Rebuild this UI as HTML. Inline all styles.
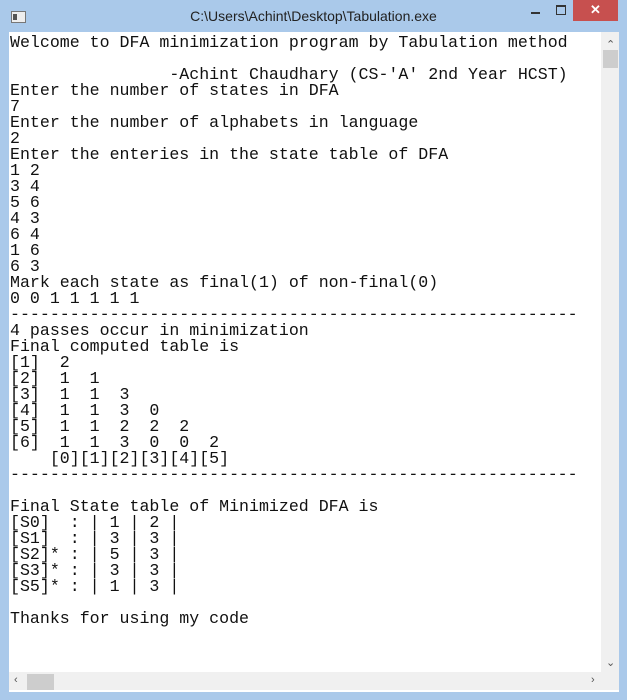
<!DOCTYPE html>
<html><head><style>
html,body{margin:0;padding:0;width:627px;height:700px;overflow:hidden;background:#aac9ea;}
.title{position:absolute;left:0;top:0;width:627px;height:32px;background:#aac9ea;}
.ttext{position:absolute;left:0;width:627px;top:8px;text-align:center;font:14px "Liberation Sans",sans-serif;color:#222;}
.icon{position:absolute;left:11px;top:11px;width:13px;height:10px;border:1px solid #777;background:#eee;}
.icon:before{content:"";position:absolute;left:1px;top:2px;width:4px;height:6px;background:#555;}
.close{position:absolute;left:573px;top:0;width:45px;height:21px;background:#c7504f;color:#fff;text-align:center;font:bold 13px "Liberation Sans",sans-serif;line-height:20px;}
.min{position:absolute;left:531px;top:12px;width:9px;height:2px;background:#333;}
.max{position:absolute;left:556px;top:5px;width:8px;height:7px;border:1px solid #333;border-top-width:2px;}
.client{position:absolute;left:9px;top:32px;width:610px;height:660px;background:#fff;}
pre{position:absolute;left:1px;top:3px;margin:0;font:16.6px/16px "Liberation Mono",monospace;color:#111;}
.vs{position:absolute;left:592px;top:0;width:18px;height:640px;background:#f0f0f0;}
.hs{position:absolute;left:0;top:640px;width:610px;height:18px;background:#f0f0f0;}
.hthumb{position:absolute;left:18px;top:642px;width:27px;height:16px;background:#cdcdcd;}
.ar{position:absolute;font:11px "Liberation Sans",sans-serif;color:#555;}
</style></head><body>
<div class="title"><div class="icon"></div><div class="ttext">C:\Users\Achint\Desktop\Tabulation.exe</div><div class="min"></div><div class="max"></div><div class="close">✕</div></div>
<div class="client">
<pre>Welcome to DFA minimization program by Tabulation method

                -Achint Chaudhary (CS-'A' 2nd Year HCST)
Enter the number of states in DFA
7
Enter the number of alphabets in language
2
Enter the enteries in the state table of DFA
1 2
3 4
5 6
4 3
6 4
1 6
6 3
Mark each state as final(1) of non-final(0)
0 0 1 1 1 1 1
---------------------------------------------------------
4 passes occur in minimization
Final computed table is
[1]  2
[2]  1  1
[3]  1  1  3
[4]  1  1  3  0
[5]  1  1  2  2  2
[6]  1  1  3  0  0  2
    [0][1][2][3][4][5]
---------------------------------------------------------

Final State table of Minimized DFA is
[S0]  : | 1 | 2 |
[S1]  : | 3 | 3 |
[S2]* : | 5 | 3 |
[S3]* : | 3 | 3 |
[S5]* : | 1 | 3 |

Thanks for using my code</pre>
<div class="vs"></div><div style="position:absolute;left:594px;top:18px;width:15px;height:18px;background:#cdcdcd"></div>
<div class="ar" style="left:597px;top:6px">⌃</div>
<div class="ar" style="left:597px;top:624px">⌄</div>
<div class="hs"></div><div class="hthumb"></div>
<div class="ar" style="left:5px;top:642px">‹</div>
<div class="ar" style="left:582px;top:642px">›</div>
</div>
</body></html>
